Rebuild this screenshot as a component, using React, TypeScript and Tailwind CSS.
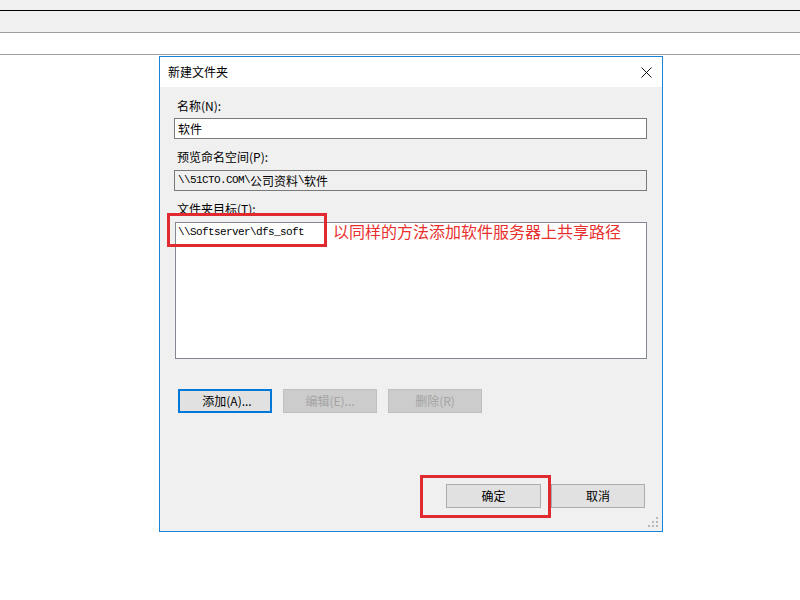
import React from "react";

const cjk = { fontFamily: '"Noto Sans CJK SC", "Microsoft YaHei", sans-serif' };
const mono = { fontFamily: '"Liberation Mono", "Noto Sans CJK SC", monospace' };

function Grip() {
  const dots = [
    [8, 0],
    [4, 4],
    [8, 4],
    [0, 8],
    [4, 8],
    [8, 8],
  ];
  return (
    <svg width="11" height="11" viewBox="0 0 11 11" className="absolute right-[3px] bottom-[3px]">
      {dots.map(([x, y], i) => (
        <rect key={i} x={x} y={y} width="2" height="2" fill="#b8b8b8" />
      ))}
    </svg>
  );
}

export default function App() {
  return (
    <div className="relative w-[800px] h-[600px] bg-white overflow-hidden" style={cjk}>
      <div className="h-[10px] bg-[#f0f0f0]" />
      <div className="h-[1px] bg-black" />
      <div className="h-[21px] bg-[#f0f0f0]" />
      <div className="h-[1px] bg-[#a0a0a0]" />
      <div className="h-[21px] bg-white" />
      <div className="h-[1px] bg-[#a0a0a0]" />

      <div className="ml-[159px] mt-[1px] w-[504px] h-[476px] border border-[#1883d7] bg-[#f0f0f0] flex flex-col relative">
        <div className="h-[30px] bg-white flex items-center justify-between pl-[8px] pr-[10px]">
          <span className="text-[12px] text-black leading-none">新建文件夹</span>
          <svg width="11" height="11" viewBox="0 0 11 11">
            <path d="M0.5 0.5 L10.5 10.5 M10.5 0.5 L0.5 10.5" stroke="#111" strokeWidth="1" />
          </svg>
        </div>
        <div className="flex flex-col pl-[14px] pr-[15px]">
          <div className="mt-[11px] h-[16px] text-[12px] leading-[16px] text-black pl-[3px]">名称(N):</div>
          <div className="mt-[4px] h-[21px] w-[473px] bg-white border border-[#7a7a7a] flex items-center pl-[3px] text-[12px] text-black">
            软件
          </div>
          <div className="mt-[10px] h-[16px] text-[12px] leading-[16px] text-black pl-[3px]">预览命名空间(P):</div>
          <div className="mt-[5px] h-[21px] w-[473px] bg-[#f0f0f0] border border-[#7a7a7a] flex items-center pl-[3px] text-[12px] text-black">
            <span style={mono} className="text-[11px] tracking-[-0.6px]">\\51CTO.COM\</span>
            <span>公司资料</span>
            <span style={mono} className="text-[11px] tracking-[-0.6px]">\</span>
            <span>软件</span>
          </div>
          <div className="mt-[10px] h-[16px] text-[12px] leading-[16px] text-black pl-[3px]">文件夹目标(T):</div>
          <div className="mt-[5px] ml-[1px] h-[137px] w-[472px] bg-white border border-[#828790] pl-[2px] pt-[1px]">
            <div style={mono} className="text-[11px] leading-[16px] text-black tracking-[-0.6px]">
              \\Softserver\dfs_soft
            </div>
          </div>
          <div className="mt-[30px] flex gap-[11px] pl-[4px]">
            <div className="w-[94px] h-[24px] border-2 border-[#0078d7] bg-[#e1e1e1] flex items-center justify-center pl-[4px] text-[12px] text-black">
              添加(A)...
            </div>
            <div className="w-[94px] h-[24px] border border-[#bfbfbf] bg-[#cccccc] flex items-center justify-center text-[12px] text-[#a3a3a3]">
              编辑(E)...
            </div>
            <div className="w-[94px] h-[24px] border border-[#bfbfbf] bg-[#cccccc] flex items-center justify-center text-[12px] text-[#a3a3a3]">
              删除(R)
            </div>
          </div>
          <div className="mt-[71px] flex justify-end gap-[10px] pr-[2px]">
            <div className="w-[95px] h-[24px] border border-[#adadad] bg-[#e1e1e1] flex items-center justify-center text-[12px] text-black">
              确定
            </div>
            <div className="w-[94px] h-[24px] border border-[#adadad] bg-[#e1e1e1] flex items-center justify-center text-[12px] text-black">
              取消
            </div>
          </div>
        </div>
        <Grip />
      </div>

      <div className="absolute left-[167px] top-[213px] w-[160px] h-[34px] border-[3px] border-[#e02a30]" />
      <div className="absolute left-[333px] top-[220px] text-[16px] leading-[22px] text-[#e8302f] whitespace-nowrap">
        以同样的方法添加软件服务器上共享路径
      </div>
      <div className="absolute left-[420px] top-[475px] w-[131px] h-[43px] border-[3px] border-[#e02a30]" />
    </div>
  );
}
